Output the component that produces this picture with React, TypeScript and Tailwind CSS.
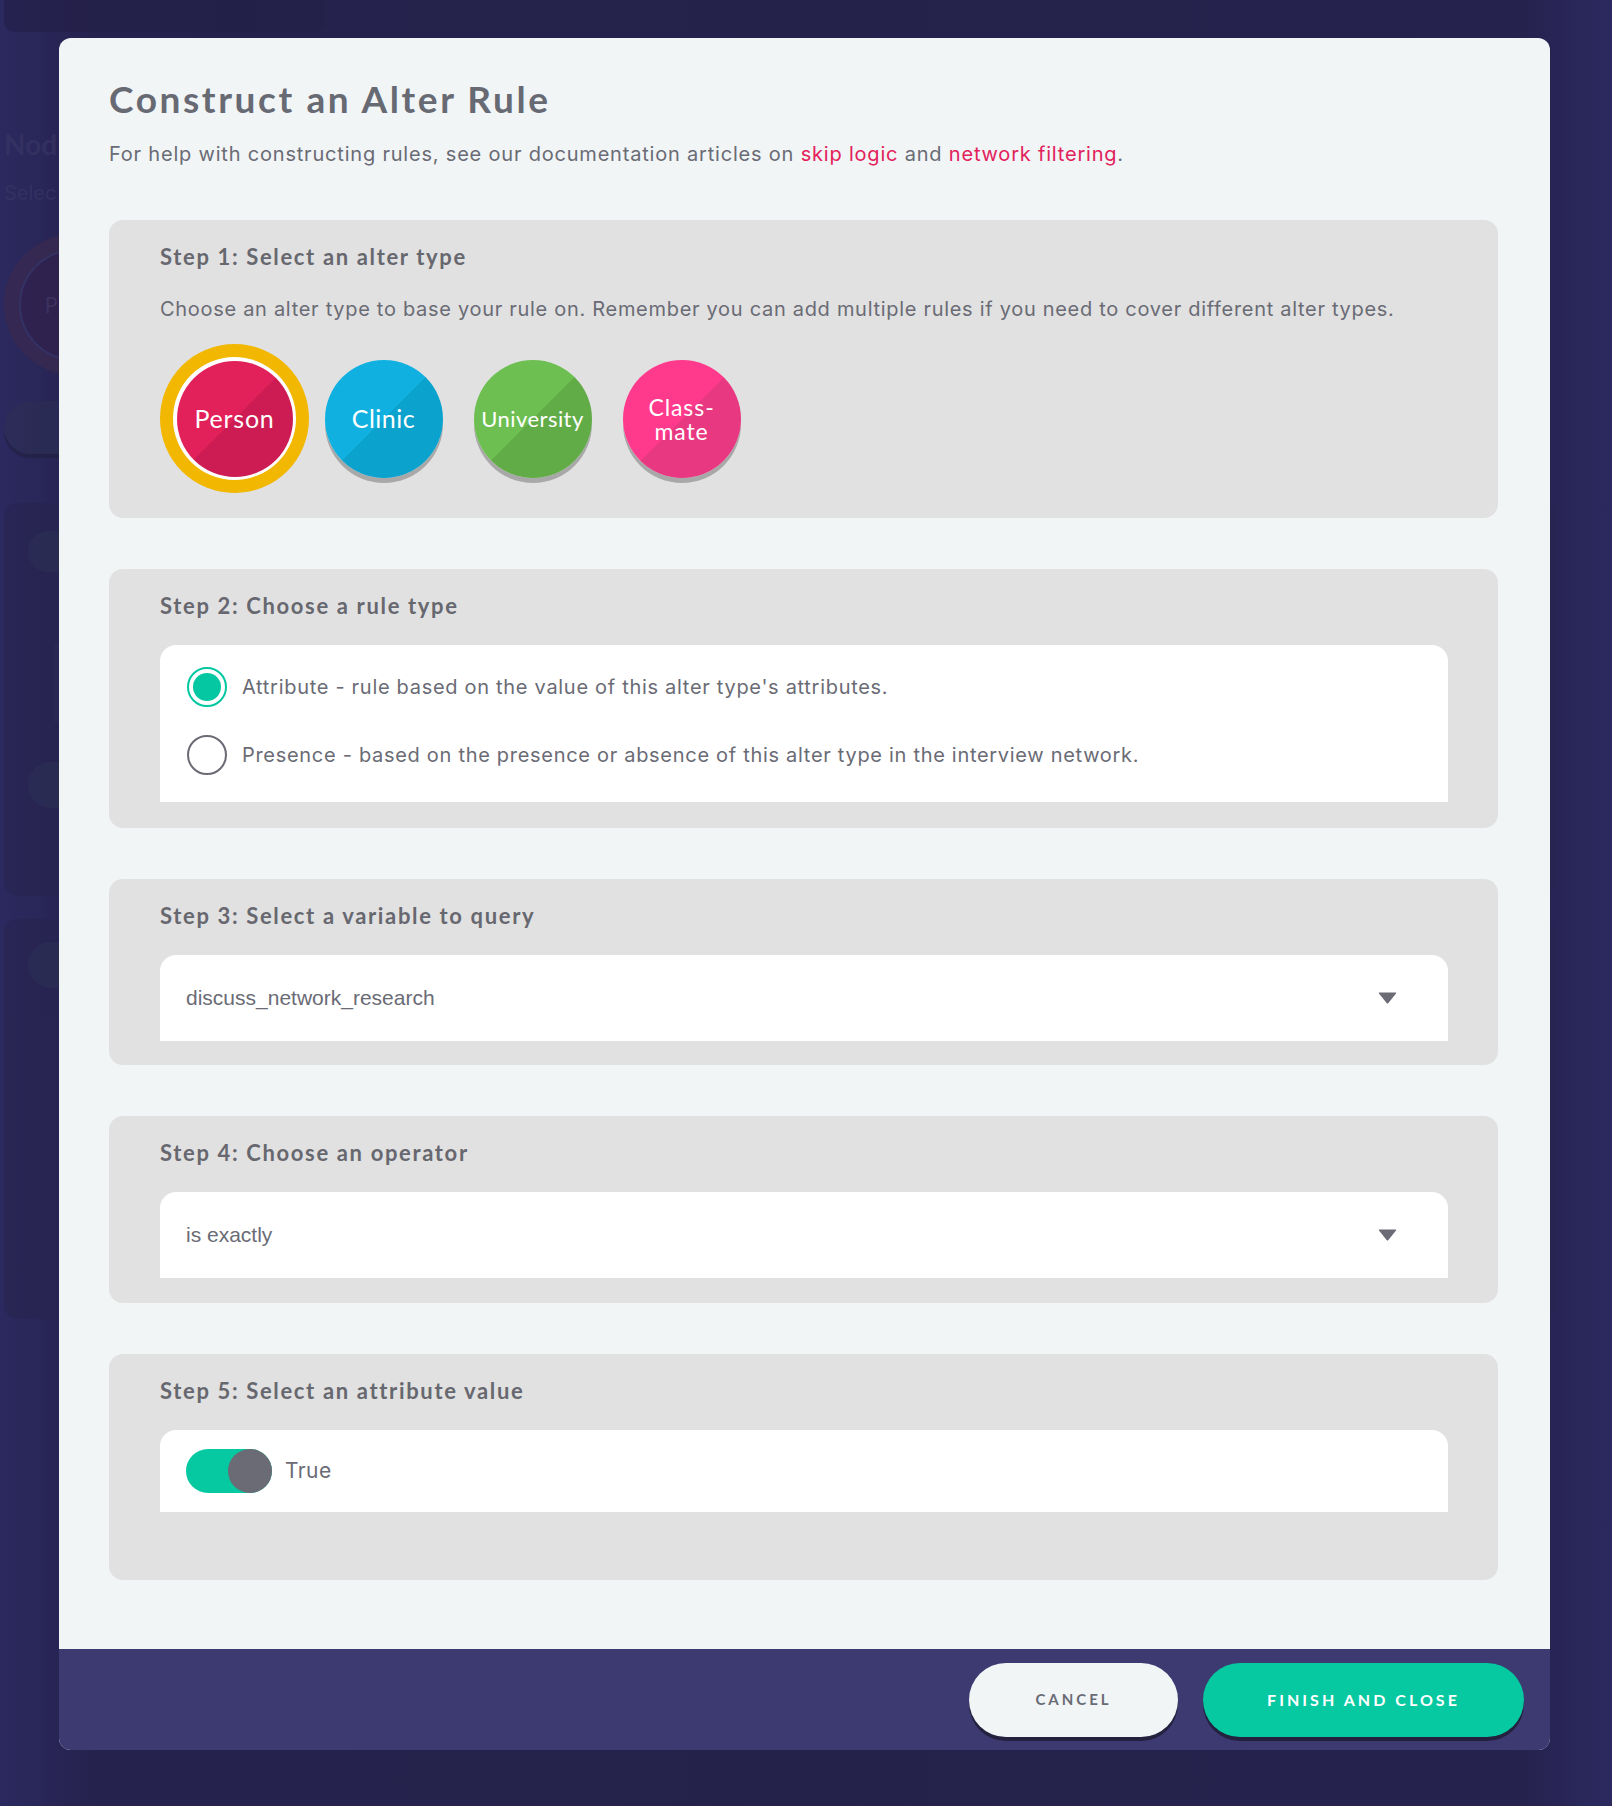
import React from 'react';

const HEAD = "font-[family-name:Lato,'Noto_Sans',sans-serif]";
const BODY = "font-[family-name:Inter,'Noto_Sans',sans-serif]";

function Card({ title, children, pb }: { title: string; children: React.ReactNode; pb: string }) {
  return (
    <div className={`rounded-[14px] bg-[#e1e1e1] pl-[51px] pr-[50px] pt-[24px] ${pb}`}>
      <h3 className={`h-[26px] leading-[26px] text-[22px] font-bold tracking-[0.075em] text-[#67686f] ${HEAD}`}>{title}</h3>
      {children}
    </div>
  );
}

function Arrow() {
  return (
    <svg width="19" height="12" viewBox="0 0 19 12" className="shrink-0">
      <path d="M1.5 0.5 H17.5 Q18.8 0.5 18 1.6 L10.4 11 Q9.5 12 8.6 11 L1 1.6 Q0.2 0.5 1.5 0.5 Z" fill="#6a6b75" />
    </svg>
  );
}

function Select({ value }: { value: string }) {
  return (
    <div className="mt-[26px] flex h-[86px] items-center justify-between rounded-t-[16px] bg-white pl-[26px] pr-[51px]">
      <span className="font-[family-name:'Liberation_Sans',Arial,sans-serif] text-[21px] text-[#6a6b75]">{value}</span>
      <Arrow />
    </div>
  );
}

function Radio({ checked, label }: { checked: boolean; label: string }) {
  return (
    <div className="flex h-[40px] items-center gap-[15px]">
      <div
        className={`flex h-[40px] w-[40px] items-center justify-center rounded-full border-2 ${
          checked ? 'border-[#05c7a1]' : 'border-[#6a6b75]'
        } bg-white`}
      >
        {checked && <div className="h-[28px] w-[28px] rounded-full bg-[#05c7a1]" />}
      </div>
      <span className={`text-[20px] tracking-[0.035em] text-[#6a6b75] ${BODY}`}>{label}</span>
    </div>
  );
}

function NodeSlot({ children }: { children: React.ReactNode }) {
  return <div className="flex h-[149px] w-[149px] items-center justify-center">{children}</div>;
}

export default function App() {
  return (
    <div className="relative h-[1806px] w-full overflow-hidden bg-[linear-gradient(90deg,#2c2960_0%,#25224d_6%,#24214b_50%,#25224d_94%,#2c2960_100%)]">
      {/* faint background page */}
      <div className="flex flex-col pl-[4px] opacity-60">
        <div className="h-[32px] w-[320px] rounded-b-[10px] bg-[#231f47]" />
        <div className={`mt-[100px] h-[24px] whitespace-nowrap text-[28px] font-bold leading-[24px] text-[#3a3766] ${HEAD}`}>
          Nod
        </div>
        <div className={`mt-[27px] h-[20px] whitespace-nowrap text-[20px] leading-[20px] text-[#3a3766] ${BODY}`}>
          Selec
        </div>
        <div className="mt-[31px] flex h-[141px] w-[141px] items-center justify-center rounded-full bg-[#3d2a4e]">
          <div className="flex h-[112px] w-[112px] items-center justify-start rounded-full border-2 border-[#3b3a6c] bg-[#34204a] pl-[24px] text-[22px] text-[#4a3a62]">
            Pe
          </div>
        </div>
        <div className="mt-[26px] flex h-[53px] w-[200px] items-center justify-center rounded-full bg-[#2c2f54] text-[36px] text-[#3d3f66] shadow-[0_4px_0_#221f40]">
          +
        </div>
        <div className="mt-[49px] h-[393px] w-[1550px] rounded-[14px] bg-[#28244f] pl-[24px] pt-[28px]">
          <div className="h-[41px] w-[120px] rounded-full bg-[#2b2f52]" />
          <div className="mt-[70px] ml-[26px] h-[80px] w-[600px] bg-[#2d2954]" />
          <div className="mt-[40px] h-[46px] w-[120px] rounded-full bg-[#2b2f52]" />
        </div>
        <div className="mt-[23px] h-[400px] w-[1550px] rounded-[14px] bg-[#28244f] pl-[24px] pt-[23px]">
          <div className="h-[46px] w-[120px] rounded-full bg-[#2b2f52]" />
        </div>
      </div>

      {/* modal overlay */}
      <div className="absolute inset-0 flex items-start pl-[59px] pt-[38px]">
        <div className="flex w-[1491px] flex-col overflow-hidden rounded-[12px] bg-[#f1f5f6]">
          <div className="pl-[50px] pr-[52px] pt-[39px] pb-[69px]">
            <h1 className={`h-[44px] whitespace-nowrap text-[37px] font-bold leading-[44px] tracking-[0.07em] text-[#676a73] ${HEAD}`}>
              Construct an Alter Rule
            </h1>
            <p className={`mt-[20px] whitespace-nowrap text-[20px] leading-[26px] tracking-[0.04em] text-[#6a6b75] ${BODY}`}>
              For help with constructing rules, see our documentation articles on{' '}
              <span className="text-[#e2215b]">skip logic</span> and{' '}
              <span className="text-[#e2215b]">network filtering</span>.
            </p>

            <div className="mt-[53px] flex flex-col gap-[51px]">
              <Card title="Step 1: Select an alter type" pb="pb-[25px]">
                <p className={`mt-[26px] whitespace-nowrap text-[20px] leading-[26px] tracking-[0.035em] text-[#6a6b75] ${BODY}`}>
                  Choose an alter type to base your rule on. Remember you can add multiple rules if you need to cover
                  different alter types.
                </p>
                <div className="mt-[22px] flex">
                  <NodeSlot>
                    <div className="flex h-[149px] w-[149px] items-center justify-center rounded-full bg-[#f2b701]">
                      <div className="flex h-[123px] w-[123px] items-center justify-center rounded-full bg-white">
                        <div className={`flex h-[116px] w-[116px] items-center justify-center rounded-full bg-[linear-gradient(135deg,#e2215b_50%,#cd1c53_50%)] text-[25px] tracking-[0.03em] text-white ${HEAD}`}>
                          Person
                        </div>
                      </div>
                    </div>
                  </NodeSlot>
                  <NodeSlot>
                    <div className={`flex h-[118px] w-[118px] items-center justify-center rounded-full bg-[linear-gradient(135deg,#10b1e1_50%,#0ba3cd_50%)] text-[25px] tracking-[0.02em] text-white shadow-[0_5px_0_rgba(0,0,0,0.25)] ${HEAD}`}>
                      Clinic
                    </div>
                  </NodeSlot>
                  <NodeSlot>
                    <div className={`flex h-[118px] w-[118px] items-center justify-center rounded-full bg-[linear-gradient(135deg,#6dbf51_50%,#62ac48_50%)] text-[22px] tracking-[0.02em] text-white shadow-[0_5px_0_rgba(0,0,0,0.25)] ${HEAD}`}>
                      University
                    </div>
                  </NodeSlot>
                  <NodeSlot>
                    <div className={`flex h-[118px] w-[118px] flex-col items-center justify-center rounded-full bg-[linear-gradient(135deg,#ff3a8c_50%,#e83881_50%)] text-center text-[23px] leading-[24px] tracking-[0.04em] text-white shadow-[0_5px_0_rgba(0,0,0,0.25)] ${HEAD}`}>
                      <span className="block h-[24px]">Class-</span>
                      <span className="block h-[24px]">mate</span>
                    </div>
                  </NodeSlot>
                </div>
              </Card>

              <Card title="Step 2: Choose a rule type" pb="pb-[26px]">
                <div className="mt-[26px] flex h-[157px] flex-col gap-[28px] rounded-t-[16px] bg-white pl-[27px] pt-[22px]">
                  <Radio checked label="Attribute - rule based on the value of this alter type's attributes." />
                  <Radio
                    checked={false}
                    label="Presence - based on the presence or absence of this alter type in the interview network."
                  />
                </div>
              </Card>

              <Card title="Step 3: Select a variable to query" pb="pb-[24px]">
                <Select value="discuss_network_research" />
              </Card>

              <Card title="Step 4: Choose an operator" pb="pb-[25px]">
                <Select value="is exactly" />
              </Card>

              <Card title="Step 5: Select an attribute value" pb="pb-[68px]">
                <div className="mt-[26px] flex h-[82px] items-center gap-[13px] rounded-t-[16px] bg-white pl-[26px]">
                  <div className="flex h-[44px] w-[86px] items-center justify-end rounded-full bg-[#06c8a1]">
                    <div className="h-[44px] w-[44px] rounded-full bg-[#6a6b75]" />
                  </div>
                  <span className={`text-[21px] tracking-[0.02em] text-[#6a6b75] ${BODY}`}>True</span>
                </div>
              </Card>
            </div>
          </div>

          <div className="flex h-[101px] items-center justify-end gap-[25px] bg-[#3c3a71] pr-[26px]">
            <button
              className={`h-[74px] w-[209px] rounded-full bg-[#f1f5f6] text-[15px] font-bold tracking-[0.2em] text-[#6a6b75] shadow-[0_4px_0_#24213f] ${HEAD}`}
            >
              CANCEL
            </button>
            <button
              className={`h-[74px] w-[321px] rounded-full bg-[#06c8a1] text-[16px] font-bold tracking-[0.19em] text-white shadow-[0_4px_0_#24213f] ${HEAD}`}
            >
              FINISH AND CLOSE
            </button>
          </div>
        </div>
      </div>
    </div>
  );
}
